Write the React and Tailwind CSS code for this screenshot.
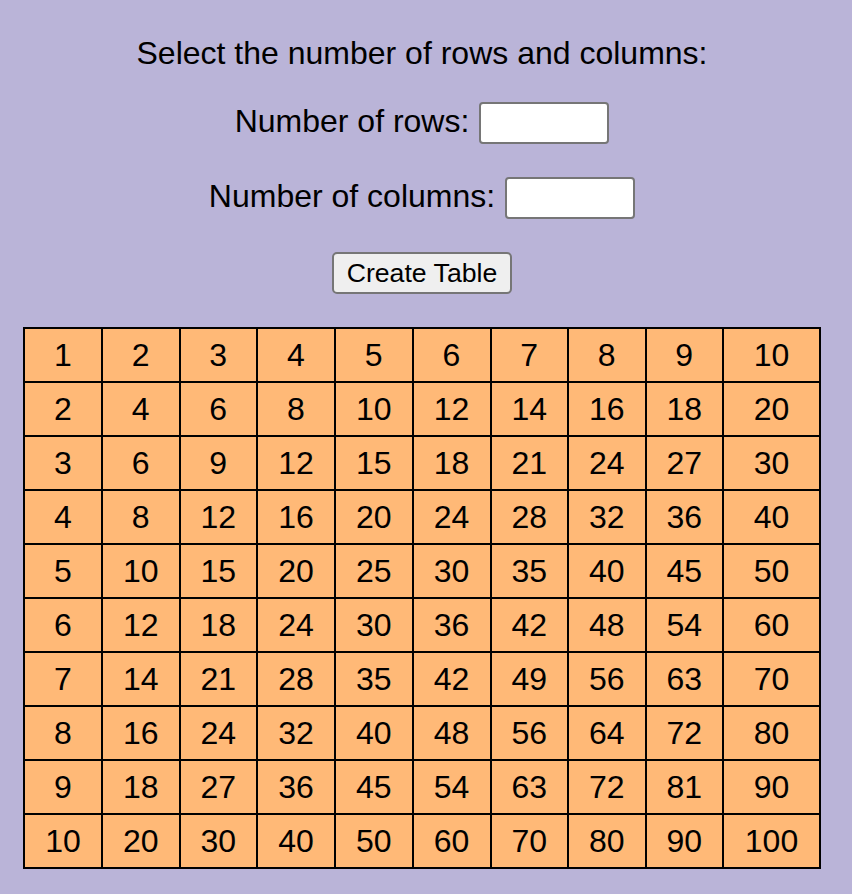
import React, { useState } from "react";

const COL_WIDTHS = [78, 77.5, 77.5, 78, 77.5, 78, 77.5, 77.5, 77.5, 97];

export default function App() {
  const [rows, setRows] = useState("");
  const [cols, setCols] = useState("");
  const [size, setSize] = useState({ r: 10, c: 10 });

  const createTable = () => {
    const r = parseInt(rows, 10);
    const c = parseInt(cols, 10);
    if (r > 0 && c > 0) setSize({ r, c });
  };

  return (
    <div
      className="min-h-screen bg-[#bab4d8] pt-[35px] pl-[16px] pr-[24px] pb-[26px] text-black"
      style={{ fontFamily: '"Liberation Sans", Arial, sans-serif' }}
    >
      <div className="flex flex-col items-center">
        <p className="text-[32px] leading-[37px]">Select the number of rows and columns:</p>

        {/* Inputs */}
        <div className="mt-[30px] flex items-center">
          <label className="mb-[4px] text-[32px] leading-[37px]">Number of rows:</label>
          <input
            type="text"
            value={rows}
            onChange={(e) => setRows(e.target.value)}
            className="ml-[10px] h-[42px] w-[130px] rounded-[4px] border-2 border-[#767676] bg-white px-1 text-[26px]"
          />
        </div>
        <div className="mt-[33px] flex items-center">
          <label className="mb-[4px] text-[32px] leading-[37px]">Number of columns:</label>
          <input
            type="text"
            value={cols}
            onChange={(e) => setCols(e.target.value)}
            className="ml-[10px] h-[42px] w-[130px] rounded-[4px] border-2 border-[#767676] bg-white px-1 text-[26px]"
          />
        </div>

        <button
          onClick={createTable}
          className="mt-[33px] h-[42px] w-[180px] rounded-[5px] border-2 border-[#767676] bg-[#efefef] text-[26.67px] leading-none"
        >
          Create Table
        </button>

        {/* Multiplication table */}
        <table className="mt-[33px] w-[796px] table-fixed border-collapse border-2 border-black bg-[#ffb977]">
          <colgroup>
            {Array.from({ length: size.c }).map((_, j) => (
              <col key={j} style={{ width: COL_WIDTHS[j] || 78 }} />
            ))}
          </colgroup>
          <tbody>
            {Array.from({ length: size.r }).map((_, i) => (
              <tr key={i} className="h-[54px]">
                {Array.from({ length: size.c }).map((_, j) => (
                  <td
                    key={j}
                    className="border-2 border-black p-0 text-center align-middle text-[32px] leading-[37px]"
                  >
                    {(i + 1) * (j + 1)}
                  </td>
                ))}
              </tr>
            ))}
          </tbody>
        </table>
      </div>
    </div>
  );
}
